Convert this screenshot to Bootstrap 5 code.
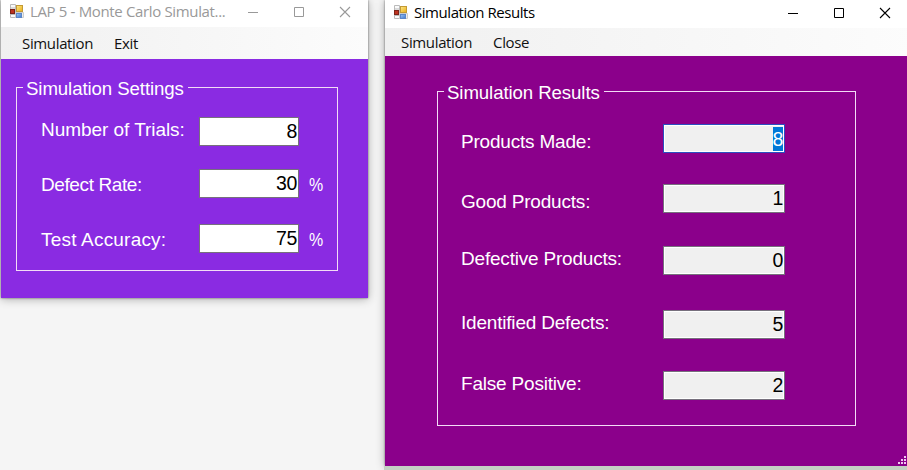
<!DOCTYPE html>
<html lang="en">
<head>
<meta charset="utf-8">
<meta name="viewport" content="width=device-width, initial-scale=1">
<title>Monte Carlo Simulation</title>
<link rel="stylesheet" href="https://cdn.jsdelivr.net/npm/bootstrap@5.3.0/dist/css/bootstrap.min.css">
<style>
body{width:907px;height:470px;background:#f5f5f5;font-family:"Open Sans","Noto Sans",sans-serif;font-size:15px;letter-spacing:-.35px;line-height:20px}
.desk-strip{left:384px;right:0;bottom:0;height:4px;background:#c4d0c4;z-index:1}
.win{box-shadow:0 1px 9px rgba(0,0,0,.3),0 0 2px rgba(0,0,0,.5)}
.win-settings{left:1px;top:0;width:367px;height:298px;background:#8a2be2}
.win-results{left:385px;top:0;width:530px;height:466px;background:#8b008b}
.titlebar{background:#fff}
.win-settings .titlebar{height:27px;color:#999;padding:0 17px 4px 8px}
.win-results .titlebar{height:28px;color:#000;padding:0 24px 3px 8px}
.caption-text{margin-left:6px;position:relative;top:-1px}
.win-results .caption-text{letter-spacing:-.45px}
.controls{gap:34px}
.win-settings .menubar{height:32px;padding:0 0 0 21px}
.win-results .menubar{height:28px;padding:0 0 1px 16px}
.menubar{gap:21px;background:linear-gradient(90deg,#f0f0f0,#fcfcfc);color:#111}
.group,.field-label,.unit,.box{font-family:"Liberation Sans",Arial,sans-serif;font-size:19px;letter-spacing:-.2px}
.group{border:1px solid #f3dcf6;color:#fff}
.group legend{font-size:18.67px;line-height:21px;padding:2px 4px 0 3px;margin:0 0 0 6px;letter-spacing:-.1px}
.win-settings .group{width:322px;height:195px;margin:17px 0 0 15px;padding:0}
.win-results .group{width:419px;height:346px;margin:24px 0 0 52px;padding:0}
.line{height:29px;line-height:21px}
.win-settings .line{padding-left:24px}
.win-results .line{padding-left:23px}
.win-settings .field-label{width:158px}
.win-results .field-label{width:202px}
.field-label.ls-trials{letter-spacing:-.05px}
.field-label.ls-rate{letter-spacing:-.4px}
.field-label.ls-accuracy{letter-spacing:.2px}
.box{height:29px;border:1px solid #77707d;background:#fff;color:#000;padding:0 1px;font-size:19.5px;letter-spacing:-.4px;box-shadow:inset 0 0 0 1px #fff}
.win-settings .box{width:100px}
.win-results .box{width:122px;background:#f0f0f0}
.win-results .box.active-box{border-color:#2a50c0}
.unit{display:inline-block;margin-left:10px;transform:scaleX(.84);transform-origin:left}
.sel{background:#0078d7;color:#fff;height:24px;line-height:24px}
.up{position:relative;top:-2px}
.down1{position:relative;top:1px}
.down3{position:relative;top:3px}
.grip{right:9px;bottom:2px}
.s1{margin-top:18px}.s2{margin-top:23px}.s3{margin-top:26px}
.r1{margin-top:21px}.r2{margin-top:31px}.r3{margin-top:33px}.r4{margin-top:35px}.r5{margin-top:32px}
</style>
<script src="https://cdn.jsdelivr.net/npm/bootstrap@5.3.0/dist/js/bootstrap.bundle.min.js"></script>
</head>
<body class="position-relative overflow-hidden m-0">
<svg width="0" height="0" class="position-absolute">
<defs>
<linearGradient id="gy" x2="1" y2="1"><stop stop-color="#ffe98a"/><stop offset="1" stop-color="#e8ad14"/></linearGradient>
<linearGradient id="gb" x2="1" y2="1"><stop stop-color="#9cc4f5"/><stop offset="1" stop-color="#3f78cd"/></linearGradient>
<symbol id="form" viewBox="0 0 15 15"><path d="M1.5.5h5v13h-5zM1.5 4h5M1.5 10.5h5" fill="#fafafa" stroke="#bbb"/><path d="M6.5 8.5h8v5h-8z" fill="#eee" stroke="#ccc"/><rect x="7.5" y="1.5" width="6" height="6" fill="url(#gy)" stroke="#c39a35"/><rect x="1.5" y="5.5" width="4" height="4" fill="#bd3320" stroke="#7d2318"/><rect x="7.5" y="9.5" width="5" height="4" fill="url(#gb)" stroke="#5b86c9"/></symbol>
<symbol id="min" viewBox="0 0 12 12"><path d="M1 6.5h10" stroke="currentColor"/></symbol>
<symbol id="max" viewBox="0 0 12 12"><path d="M1.5 1.5h9v9h-9z" fill="none" stroke="currentColor"/></symbol>
<symbol id="cls" viewBox="0 0 12 12"><path d="M1 1l10 10M11 1L1 11" stroke="currentColor" stroke-width="1.1"/></symbol>
</defs>
</svg>
<div class="desk-strip position-absolute"></div>

<main class="win win-settings position-absolute d-flex flex-column">
<header class="titlebar d-flex align-items-center">
<svg width="15" height="15"><use href="#form"/></svg>
<span class="caption-text text-nowrap">LAP 5 - Monte Carlo Simulat...</span>
<div class="controls d-flex ms-auto"><svg width="12" height="12"><use href="#min"/></svg><svg width="12" height="12"><use href="#max"/></svg><svg width="12" height="12"><use href="#cls"/></svg></div>
</header>
<nav class="menubar d-flex align-items-center"><span>Simulation</span><span>Exit</span></nav>
<fieldset class="group">
<legend class="float-none w-auto">Simulation Settings</legend>
<div class="line s1 d-flex align-items-center"><label class="field-label ls-trials up">Number of Trials:</label><div class="box d-flex align-items-center justify-content-end">8</div></div>
<div class="line s2 d-flex align-items-center"><label class="field-label ls-rate down1">Defect Rate:</label><div class="box d-flex align-items-center justify-content-end">30</div><span class="unit down1">%</span></div>
<div class="line s3 d-flex align-items-center"><label class="field-label ls-accuracy down1">Test Accuracy:</label><div class="box d-flex align-items-center justify-content-end">75</div><span class="unit down1">%</span></div>
</fieldset>
</main>

<section class="win win-results position-absolute d-flex flex-column">
<header class="titlebar d-flex align-items-center">
<svg width="15" height="15"><use href="#form"/></svg>
<span class="caption-text text-nowrap">Simulation Results</span>
<div class="controls d-flex ms-auto"><svg width="12" height="12"><use href="#min"/></svg><svg width="12" height="12"><use href="#max"/></svg><svg width="12" height="12"><use href="#cls"/></svg></div>
</header>
<nav class="menubar d-flex align-items-center"><span>Simulation</span><span>Close</span></nav>
<fieldset class="group">
<legend class="float-none w-auto">Simulation Results</legend>
<div class="line r1 d-flex align-items-center"><label class="field-label down3">Products Made:</label><div class="box active-box d-flex align-items-center justify-content-end"><span class="sel">8</span></div></div>
<div class="line r2 d-flex align-items-center"><label class="field-label down3">Good Products:</label><div class="box d-flex align-items-center justify-content-end">1</div></div>
<div class="line r3 d-flex align-items-center"><label class="field-label up">Defective Products:</label><div class="box d-flex align-items-center justify-content-end">0</div></div>
<div class="line r4 d-flex align-items-center"><label class="field-label up">Identified Defects:</label><div class="box d-flex align-items-center justify-content-end">5</div></div>
<div class="line r5 d-flex align-items-center"><label class="field-label up">False Positive:</label><div class="box d-flex align-items-center justify-content-end">2</div></div>
</fieldset>
<svg class="grip position-absolute" width="8" height="8" fill="#f0c8f0"><path d="M6 0h2v2H6zM3 3h2v2H3zM6 3h2v2H6zM0 6h2v2H0zM3 6h2v2H3zM6 6h2v2H6z"/></svg>
</section>
</body>
</html>
